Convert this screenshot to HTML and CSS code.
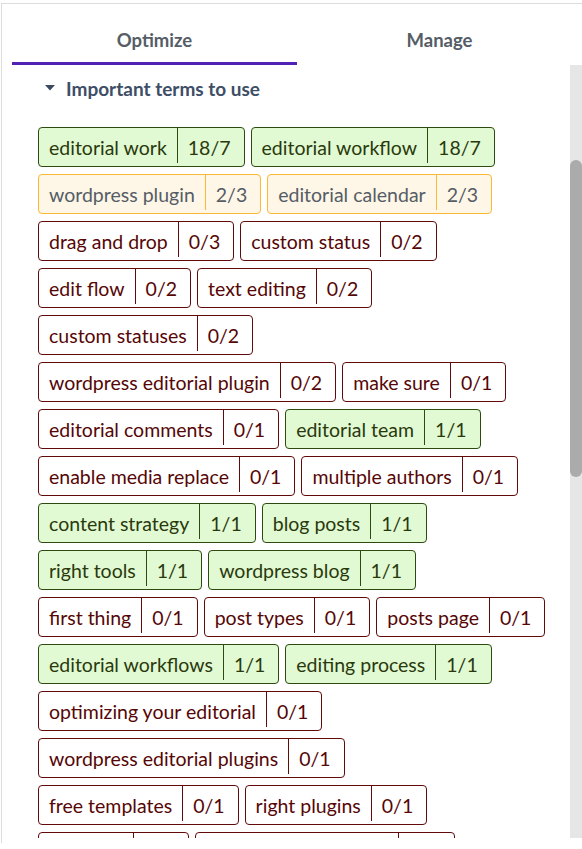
FILE: index.html
```html
<!DOCTYPE html>
<html lang="en">
<head>
<meta charset="utf-8">
<title>Optimize</title>
<link rel="stylesheet" href="styles.css">
</head>
<body>
<div class="panel">
  <div class="tabs">
    <div class="tab active">Optimize</div>
    <div class="tab">Manage</div>
  </div>
  <div class="main">
    <div class="content">
      <div class="heading">
        <svg class="caret" width="10" height="6" viewBox="0 0 10 6"><path d="M0 0h10L5 5.5z" fill="#3b4a5f"/></svg>
        <span>Important terms to use</span>
      </div>
      <div class="tags">
        <div class="tag good"><span class="label">editorial work</span><span class="count">18/7</span></div>
        <div class="tag good"><span class="label">editorial workflow</span><span class="count">18/7</span></div>
        <div class="tag partial"><span class="label">wordpress plugin</span><span class="count">2/3</span></div>
        <div class="tag partial"><span class="label">editorial calendar</span><span class="count">2/3</span></div>
        <div class="tag"><span class="label">drag and drop</span><span class="count">0/3</span></div>
        <div class="tag"><span class="label">custom status</span><span class="count">0/2</span></div>
        <div class="tag"><span class="label">edit flow</span><span class="count">0/2</span></div>
        <div class="tag"><span class="label">text editing</span><span class="count">0/2</span></div>
        <div class="tag"><span class="label">custom statuses</span><span class="count">0/2</span></div>
        <div class="tag"><span class="label">wordpress editorial plugin</span><span class="count">0/2</span></div>
        <div class="tag"><span class="label">make sure</span><span class="count">0/1</span></div>
        <div class="tag"><span class="label">editorial comments</span><span class="count">0/1</span></div>
        <div class="tag good"><span class="label">editorial team</span><span class="count">1/1</span></div>
        <div class="tag"><span class="label">enable media replace</span><span class="count">0/1</span></div>
        <div class="tag"><span class="label">multiple authors</span><span class="count">0/1</span></div>
        <div class="tag good"><span class="label">content strategy</span><span class="count">1/1</span></div>
        <div class="tag good"><span class="label">blog posts</span><span class="count">1/1</span></div>
        <div class="tag good"><span class="label">right tools</span><span class="count">1/1</span></div>
        <div class="tag good"><span class="label">wordpress blog</span><span class="count">1/1</span></div>
        <div class="tag"><span class="label">first thing</span><span class="count">0/1</span></div>
        <div class="tag"><span class="label">post types</span><span class="count">0/1</span></div>
        <div class="tag"><span class="label">posts page</span><span class="count">0/1</span></div>
        <div class="tag good"><span class="label">editorial workflows</span><span class="count">1/1</span></div>
        <div class="tag good"><span class="label">editing process</span><span class="count">1/1</span></div>
        <div class="tag"><span class="label">optimizing your editorial</span><span class="count">0/1</span></div>
        <div class="tag"><span class="label">wordpress editorial plugins</span><span class="count">0/1</span></div>
        <div class="tag"><span class="label">free templates</span><span class="count">0/1</span></div>
        <div class="tag"><span class="label">right plugins</span><span class="count">0/1</span></div>
        <div class="tag"><span class="label">user role</span><span class="count">0/1</span></div>
        <div class="tag"><span class="label">editorial content plan</span><span class="count">0/1</span></div>
        <div class="tag"><span class="label">editorial process</span><span class="count">0/1</span></div>
      </div>
    </div>
    <div class="scrollbar"><div class="thumb"></div></div>
  </div>
</div>
</body>
</html>
```
FILE: styles.css
```css
* { box-sizing: border-box; }
html, body { margin: 0; padding: 0; background: #fff; }
body { font-family: Lato, "Open Sans", sans-serif; }

.panel {
  margin: 3px 0 0 1px;
  height: 840px;
  border-top: 1px solid #dcdcde;
  border-left: 1px solid #dcdcde;
}

.tabs {
  display: flex;
  margin-left: 10px;
  height: 61px;
}
.tab {
  flex: 1;
  text-align: center;
  padding-top: 25px;
  font-size: 18.5px;
  line-height: 22px;
  font-weight: 700;
  color: #555d66;
  border-bottom: 3px solid transparent;
}
.tab.active { border-bottom-color: #5221b5; }

.main {
  display: flex;
  height: 773px;
}
.content {
  flex: 1;
  overflow: hidden;
  padding: 13px 20px 0 36px;
}
.scrollbar {
  width: 12px;
  background: #e6e6e6;
}
.thumb {
  margin-top: 95px;
  height: 317px;
  background: #ababab;
  border-radius: 6px;
}

.heading {
  display: flex;
  align-items: center;
  gap: 12px;
  padding-left: 7px;
  font-size: 19px;
  line-height: 22px;
  font-weight: 700;
  color: #3d4e66;
}
.heading span { margin-left: -1px; }
.caret { margin-top: -2px; }

.tags {
  display: flex;
  flex-wrap: wrap;
  gap: 7px 6px;
  margin-top: 27px;
}
.tag {
  display: flex;
  align-items: stretch;
  height: 40px;
  border: 1px solid #600a0a;
  border-radius: 4px;
  background: #fff;
  color: #560606;
  font-size: 19.5px;
  white-space: nowrap;
}
.label {
  display: flex;
  align-items: center;
  padding: 0 10px;
}
.count {
  display: flex;
  align-items: center;
  margin-bottom: 3px;
  padding: 3px 13px 0 10px;
  border-left: 1px solid #600a0a;
}
.tag.good {
  background: #e1fad4;
  border-color: #2d4a0f;
  color: #2a390c;
}
.tag.good .count { border-left-color: #2d4a0f; }
.tag.partial {
  background: #fef6e7;
  border-color: #f9b935;
  color: #555d66;
}
.tag.partial .count { border-left-color: #f9b935; }
```
